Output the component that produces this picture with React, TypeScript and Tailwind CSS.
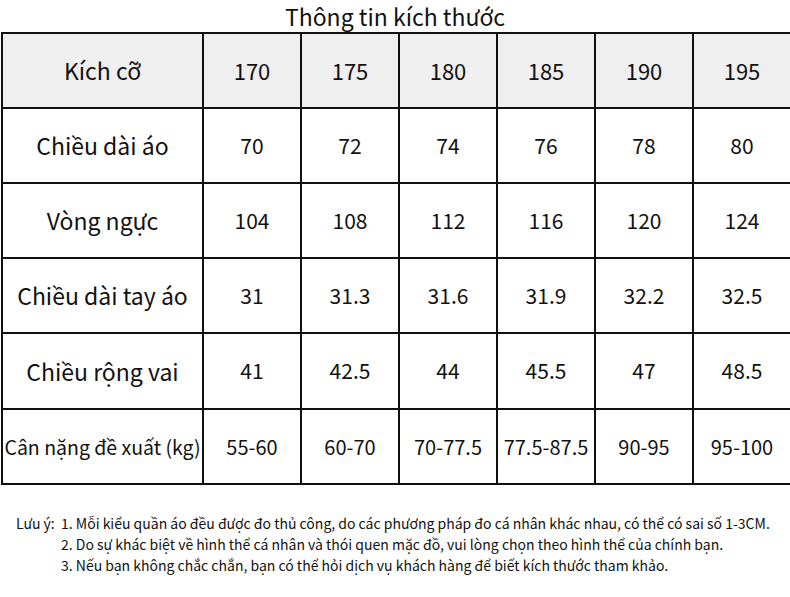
const sizes = ["170", "175", "180", "185", "190", "195"];

const rows: { label: string; values: string[]; small?: boolean }[] = [
  { label: "Chiều dài áo", values: ["70", "72", "74", "76", "78", "80"] },
  { label: "Vòng ngực", values: ["104", "108", "112", "116", "120", "124"] },
  { label: "Chiều dài tay áo", values: ["31", "31.3", "31.6", "31.9", "32.2", "32.5"] },
  { label: "Chiều rộng vai", values: ["41", "42.5", "44", "45.5", "47", "48.5"] },
  {
    label: "Cân nặng đề xuất (kg)",
    values: ["55-60", "60-70", "70-77.5", "77.5-87.5", "90-95", "95-100"],
    small: true,
  },
];

const heights = ["h-[73px]", "h-[73px]", "h-[73px]", "h-[73px]", "h-[74px]", "h-[73px]"];

export default function App() {
  return (
    <div
      className="w-[790px] h-[597px] overflow-hidden bg-white text-[#111]"
      style={{ fontFamily: '"Noto Sans CJK SC", "Noto Sans", sans-serif' }}
    >
      <div className="h-[32px] pt-[2px] text-center text-[23px] leading-[28px]">
        Thông tin kích thước
      </div>

      <div className="ml-px w-[793px] bg-[#111] p-[2px] grid grid-cols-[199px_repeat(6,96px)] gap-[2px]">
        <div className={`bg-[#efefef] ${heights[0]} flex items-center justify-center text-[23px]`}>Kích cỡ</div>
        {sizes.map((s) => (
          <div key={s} className={`bg-[#efefef] ${heights[0]} flex items-center justify-center text-[22px]`}>
            {s}
          </div>
        ))}
        {rows.map((r, i) => (
          <div key={r.label} className="contents">
            <div
              className={`bg-white ${heights[i + 1]} flex items-center justify-center whitespace-nowrap ${
                r.small ? "text-[19.5px]" : "text-[23px]"
              }`}
            >
              {r.label}
            </div>
            {r.values.map((v, j) => (
              <div
                key={j}
                className={`bg-white ${heights[i + 1]} flex items-center justify-center whitespace-nowrap ${
                  r.small ? "text-[20px]" : "text-[21px]"
                }`}
              >
                {v}
              </div>
            ))}
          </div>
        ))}
      </div>

      <div className="mt-[28px] pl-[16px] text-[14px] leading-[21px] whitespace-nowrap">
        <div className="flex">
          <span className="w-[45px]">Lưu ý:</span>
          <span>1. Mỗi kiểu quần áo đều được đo thủ công, do các phương pháp đo cá nhân khác nhau, có thể có sai số 1-3CM.</span>
        </div>
        <div className="pl-[45px]">2. Do sự khác biệt về hình thể cá nhân và thói quen mặc đồ, vui lòng chọn theo hình thể của chính bạn.</div>
        <div className="pl-[45px]">3. Nếu bạn không chắc chắn, bạn có thể hỏi dịch vụ khách hàng để biết kích thước tham khảo.</div>
      </div>
    </div>
  );
}
